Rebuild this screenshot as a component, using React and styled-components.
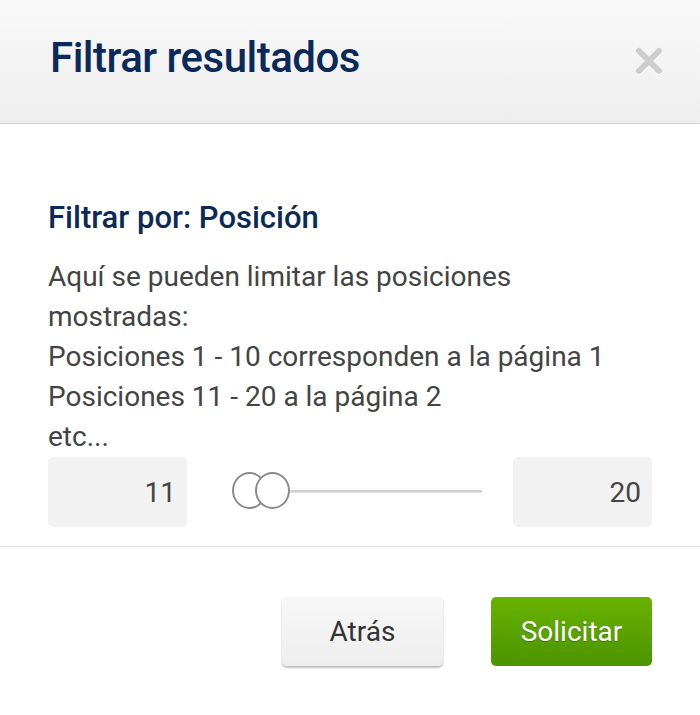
import React from 'react';
import styled, { createGlobalStyle } from 'styled-components';

const GlobalStyle = createGlobalStyle`
  html, body {
    margin: 0;
    padding: 0;
    background: #ffffff;
  }
  body {
    font-family: Roboto, 'Liberation Sans', sans-serif;
  }
`;

const Modal = styled.div`
  width: 700px;
  min-height: 715px;
  background: #ffffff;
  display: flex;
  flex-direction: column;
`;

const Header = styled.div`
  height: 124px;
  box-sizing: border-box;
  padding: 37px 36px 0 50px;
  display: flex;
  align-items: flex-start;
  justify-content: space-between;
  background: linear-gradient(to bottom, #f9f9f9 0%, #eeeeee 100%);
  border-bottom: 1px solid #d6d6d6;
`;

const Title = styled.h1`
  margin: 0;
  font-family: Roboto, 'Liberation Sans', sans-serif;
  font-weight: 500;
  font-size: 42px;
  line-height: 42px;
  letter-spacing: -0.5px;
  color: #0b2a59;
`;

const Close = styled.button`
  border: 0;
  background: none;
  padding: 0;
  width: 30px;
  height: 30px;
  margin-top: 9px;
  cursor: pointer;
  display: flex;
  filter: drop-shadow(0 1px 0 #ffffff);
`;

const Body = styled.div`
  padding: 77px 48px 19px;
  border-bottom: 1px solid #dddddd;
`;

const SubTitle = styled.h2`
  margin: 0 0 22px;
  font-family: Roboto, 'Liberation Sans', sans-serif;
  font-weight: 500;
  font-size: 31px;
  line-height: 34px;
  letter-spacing: 0;
  color: #0b2a59;
`;

const Text = styled.p`
  margin: 0;
  font-size: 28px;
  line-height: 40px;
  color: #444444;
`;

const RangeRow = styled.div`
  display: grid;
  grid-template-columns: 139px 1fr 139px;
  align-items: center;
  height: 70px;
`;

const NumberBox = styled.div`
  height: 70px;
  box-sizing: border-box;
  border-radius: 5px;
  background: #f2f2f2;
  display: flex;
  align-items: center;
  justify-content: flex-end;
  padding-right: 11px;
  font-size: 28px;
  color: #444444;
`;

const Slider = styled.div`
  position: relative;
  height: 40px;
  margin: 0 31px 0 45px;
`;

const Track = styled.div`
  position: absolute;
  left: 58px;
  right: 0;
  top: 18px;
  height: 3px;
  background: linear-gradient(to bottom, #d2d2d2 0%, #d2d2d2 60%, #e8e8e8 100%);
`;

const Thumb = styled.div`
  position: absolute;
  top: 0;
  left: ${p => p.$left}px;
  width: 35px;
  height: 37px;
  box-sizing: border-box;
  border: 2px solid #8a8a8a;
  border-radius: 50%;
  background: #ffffff;
`;

const Footer = styled.div`
  display: flex;
  justify-content: flex-end;
  gap: 48px;
  padding: 50px 48px 0;
`;

const Button = styled.button`
  width: 161px;
  height: 69px;
  border-radius: 5px;
  font-family: Roboto, 'Liberation Sans', sans-serif;
  font-size: 28px;
  cursor: pointer;
  border: 0;
  ${p => p.$primary ? `
    background: linear-gradient(to bottom, #68b300 0%, #5aa300 50%, #4c9400 100%);
    color: #ffffff;
    text-shadow: 0 1px 1px rgba(0,0,0,0.25);
  ` : `
    background: linear-gradient(to bottom, #f7f7f7 0%, #eeeeee 100%);
    color: #333333;
    box-shadow: 0 2px 2px rgba(0,0,0,0.25), 0 0 1px rgba(0,0,0,0.15);
  `}
`;

const CloseIcon = () => (
  <svg width="30" height="30" viewBox="0 0 30 30">
    <path d="M5 5 L25 25 M25 5 L5 25" stroke="#cdcdcd" strokeWidth="6" strokeLinecap="round" />
  </svg>
);

export default function App() {
  return (
    <Modal>
      <GlobalStyle />
      <Header>
        <Title>Filtrar resultados</Title>
        <Close aria-label="Cerrar"><CloseIcon /></Close>
      </Header>
      <Body>
        <SubTitle>Filtrar por: Posición</SubTitle>
        <Text>
          Aquí se pueden limitar las posiciones<br />
          mostradas:<br />
          Posiciones 1 - 10 corresponden a la página 1<br />
          Posiciones 11 - 20 a la página 2<br />
          etc...
        </Text>
        <RangeRow>
          <NumberBox>11</NumberBox>
          <Slider>
            <Track />
            <Thumb $left={0} />
            <Thumb $left={23} />
          </Slider>
          <NumberBox>20</NumberBox>
        </RangeRow>
      </Body>
      <Footer>
        <Button>Atrás</Button>
        <Button $primary>Solicitar</Button>
      </Footer>
    </Modal>
  );
}
